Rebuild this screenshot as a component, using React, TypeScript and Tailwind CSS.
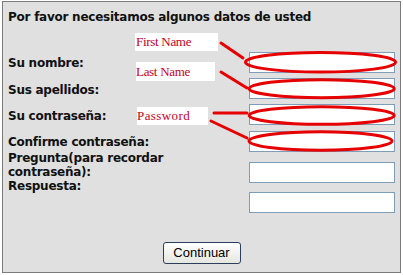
import React from "react";

const labelCls = "text-[12px] leading-[14px] font-bold tracking-[-0.25px] text-[#111]";
const inputCls = "w-[146px] h-[21px] bg-white border border-[#7f9db9] shrink-0";

export default function App() {
  return (
    <div className="relative w-[403px] h-[275px] bg-white overflow-hidden" style={{ fontFamily: '"DejaVu Sans", Verdana, sans-serif' }}>
      <div className="ml-[2px] mt-[1px] w-[399px] h-[272px] border border-[#7b7b7b] bg-[#e0e0e0] flex flex-col pl-[5px] pr-[5px] pt-[8px]">
        <div className={labelCls}>Por favor necesitamos algunos datos de usted</div>
        <div className="mt-[26px] flex flex-col">
          <div className="h-[26px] flex justify-between">
            <div className={`${labelCls} pt-[6px]`}>Su nombre:</div>
            <div className={`${inputCls} mt-[2px]`} />
          </div>
          <div className="h-[26px] flex justify-between">
            <div className={`${labelCls} pt-[7px]`}>Sus apellidos:</div>
            <div className={`${inputCls} mt-[2px]`} />
          </div>
          <div className="h-[26px] flex justify-between">
            <div className={`${labelCls} pt-[7px]`}>Su contraseña:</div>
            <div className={`${inputCls} mt-[2px]`} />
          </div>
          <div className="h-[22px] flex justify-between">
            <div className={`${labelCls} pt-[7px]`}>Confirme contraseña:</div>
            <div className={`${inputCls} mt-[3px]`} />
          </div>
          <div className="h-[28px] flex justify-between">
            <div className={`${labelCls} pt-[1px]`}>
              Pregunta(para recordar
              <br />
              contraseña):
            </div>
            <div className={`${inputCls} mt-[12px]`} />
          </div>
          <div className="h-[35px] flex justify-between">
            <div className={`${labelCls} pt-[1px]`}>Respuesta:</div>
            <div className={`${inputCls} mt-[14px]`} />
          </div>
        </div>
        <div className="mt-[29px] flex justify-center">
          <button
            className="w-[78px] h-[22px] rounded-[3px] border border-[#2c3e5c] bg-gradient-to-b from-white to-[#e6e6e0] text-[13px] leading-[20px] text-black"
            style={{ fontFamily: '"Liberation Sans", Arial, sans-serif' }}
          >
            Continuar
          </button>
        </div>
      </div>

      {/* annotation labels */}
      <div
        className="absolute left-[135px] top-[33px] w-[83px] h-[18px] bg-white text-[#c8001e] text-[13px] leading-[18px] tracking-[-0.3px] pl-[1px]"
        style={{ fontFamily: '"Liberation Serif", "Times New Roman", serif' }}
      >
        First Name
      </div>
      <div
        className="absolute left-[136px] top-[62px] w-[79px] h-[19px] bg-white text-[#c8001e] text-[13px] leading-[19px] tracking-[-0.3px]"
        style={{ fontFamily: '"Liberation Serif", "Times New Roman", serif' }}
      >
        Last Name
      </div>
      <div
        className="absolute left-[137px] top-[107px] w-[71px] h-[18px] bg-white text-[#c8001e] text-[13px] leading-[18px] tracking-[0.4px]"
        style={{ fontFamily: '"Liberation Serif", "Times New Roman", serif' }}
      >
        Password
      </div>

      <svg className="absolute left-0 top-0 pointer-events-none" width="403" height="275" viewBox="0 0 403 275">
        <g stroke="#e60000" strokeWidth="3" fill="none" strokeLinecap="round">
          <line x1="221" y1="43" x2="243" y2="58" />
          <line x1="221" y1="72" x2="247" y2="88" />
          <line x1="214" y1="113" x2="247" y2="113" />
          <line x1="211" y1="121" x2="247" y2="138" />
          <ellipse cx="320.5" cy="62.2" rx="75" ry="9.8" />
          <ellipse cx="321.7" cy="88.7" rx="72.5" ry="9" />
          <ellipse cx="321.7" cy="115.5" rx="72.5" ry="8.8" />
          <ellipse cx="320.5" cy="141" rx="71.5" ry="9.3" />
        </g>
      </svg>
    </div>
  );
}
